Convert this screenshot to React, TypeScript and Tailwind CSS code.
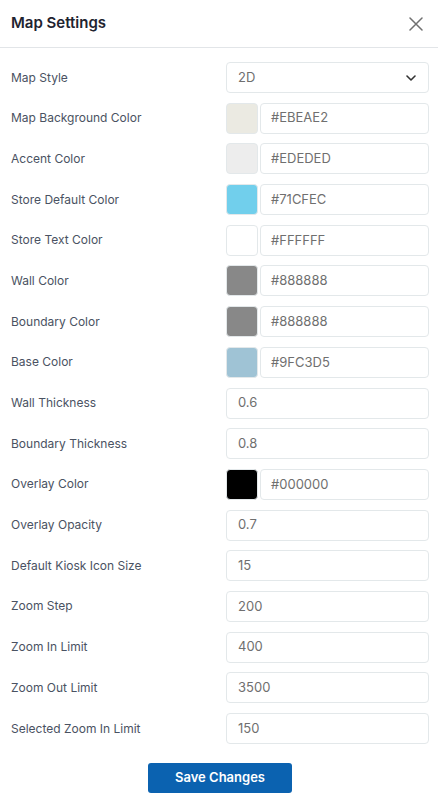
import React from "react";

type Row =
  | { label: string; kind: "select"; value: string }
  | { label: string; kind: "color"; value: string; swatch: string }
  | { label: string; kind: "text"; value: string };

const rows: Row[] = [
  { label: "Map Style", kind: "select", value: "2D" },
  { label: "Map Background Color", kind: "color", value: "#EBEAE2", swatch: "#EBEAE2" },
  { label: "Accent Color", kind: "color", value: "#EDEDED", swatch: "#EDEDED" },
  { label: "Store Default Color", kind: "color", value: "#71CFEC", swatch: "#71CFEC" },
  { label: "Store Text Color", kind: "color", value: "#FFFFFF", swatch: "#FFFFFF" },
  { label: "Wall Color", kind: "color", value: "#888888", swatch: "#888888" },
  { label: "Boundary Color", kind: "color", value: "#888888", swatch: "#888888" },
  { label: "Base Color", kind: "color", value: "#9FC3D5", swatch: "#9FC3D5" },
  { label: "Wall Thickness", kind: "text", value: "0.6" },
  { label: "Boundary Thickness", kind: "text", value: "0.8" },
  { label: "Overlay Color", kind: "color", value: "#000000", swatch: "#000000" },
  { label: "Overlay Opacity", kind: "text", value: "0.7" },
  { label: "Default Kiosk Icon Size", kind: "text", value: "15" },
  { label: "Zoom Step", kind: "text", value: "200" },
  { label: "Zoom In Limit", kind: "text", value: "400" },
  { label: "Zoom Out Limit", kind: "text", value: "3500" },
  { label: "Selected Zoom In Limit", kind: "text", value: "150" },
];

function Field({ row }: { row: Row }) {
  if (row.kind === "select") {
    return (
      <div className="flex h-[31px] w-[203px] items-center justify-between rounded-[4px] border border-[#e3e8ea] bg-white pl-[11px] pr-[12px] text-[13px] text-[#6f6f6f]">
        <span>{row.value}</span>
        <svg width="10" height="6" viewBox="0 0 10 6" fill="none">
          <path d="M1 1l4 4 4-4" stroke="#333" strokeWidth="1.6" strokeLinecap="round" strokeLinejoin="round" />
        </svg>
      </div>
    );
  }
  if (row.kind === "color") {
    return (
      <div className="flex h-[31px] w-[203px] gap-[2px]">
        <div
          className="h-full w-[32px] shrink-0 rounded-[4px] border border-[#e3e8ea]"
          style={{ backgroundColor: row.swatch }}
        />
        <div className="flex h-full flex-1 items-center rounded-[4px] border border-[#e3e8ea] bg-white pl-[10px] text-[13px] text-[#6f6f6f]">
          {row.value}
        </div>
      </div>
    );
  }
  return (
    <div className="flex h-[31px] w-[203px] items-center rounded-[4px] border border-[#e3e8ea] bg-white pl-[11px] text-[13px] text-[#6f6f6f]">
      {row.value}
    </div>
  );
}

export default function App() {
  return (
    <div
      className="h-[803px] w-[438px] bg-white"
      style={{ fontFamily: "Inter, 'Noto Sans', sans-serif" }}
    >
      <div className="flex h-[48px] items-center justify-between border-b border-[#e2e5e8] pl-[11px] pr-[15px]">
        <h1 className="text-[15px] font-semibold text-[#1f2430]">Map Settings</h1>
        <svg width="14" height="14" viewBox="0 0 14 14" fill="none">
          <path d="M1 1l12 12M13 1L1 13" stroke="#707070" strokeWidth="1.5" strokeLinecap="round" />
        </svg>
      </div>
      <div className="flex flex-col gap-[9.7px] pl-[11px] pr-[9px] pt-[14px]">
        {rows.map((r) => (
          <div key={r.label} className="flex h-[31px] items-center justify-between">
            <span className="text-[12px] text-[#4a5262]">{r.label}</span>
            <Field row={r} />
          </div>
        ))}
      </div>
      <div className="flex justify-center pt-[19px]">
        <button className="ml-[2px] h-[30px] w-[144px] rounded-[3px] bg-[#0b62b0] text-[13px] font-semibold text-white">
          Save Changes
        </button>
      </div>
    </div>
  );
}
